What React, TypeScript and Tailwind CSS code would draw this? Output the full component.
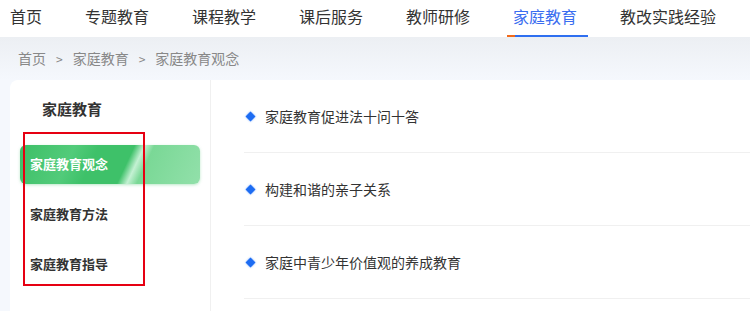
const navItems = ["首页", "专题教育", "课程教学", "课后服务", "教师研修", "家庭教育", "教改实践经验"]

const sideItems = ["家庭教育观念", "家庭教育方法", "家庭教育指导"]

const articles = ["家庭教育促进法十问十答", "构建和谐的亲子关系", "家庭中青少年价值观的养成教育"]

export default function App() {
  return (
    <div
      className="relative h-[311px] w-[750px] overflow-hidden bg-[#f5f8fd] text-[#333]"
      style={{ fontFamily: '"Noto Sans CJK SC", "Noto Sans", sans-serif' }}
    >
      {/* Top nav */}
      <nav className="flex h-[37px] items-center gap-[43px] bg-white pl-[10px] text-[16px] leading-none">
        {navItems.map((item) => {
          const active = item === "家庭教育"
          return (
            <div key={item} className="relative flex h-full items-center pb-[6px]">
              <span className={active ? "text-[#3a6df0]" : "text-[#333]"}>{item}</span>
              {active && (
                <div className="absolute bottom-0 left-[-6px] flex h-[2px] w-[81px]">
                  <div className="w-[8px] bg-[#f26a1b]" />
                  <div className="flex-1 bg-[#2f6ff0]" />
                </div>
              )}
            </div>
          )
        })}
      </nav>

      {/* Breadcrumb */}
      <div className="flex h-[43px] items-center gap-[10px] bg-gradient-to-b from-[#eceff3] to-[#f5f8fd] pl-[18px] text-[14px] text-[#888]">
        <span>首页</span>
        <span className="text-[12px]">&gt;</span>
        <span>家庭教育</span>
        <span className="text-[12px]">&gt;</span>
        <span>家庭教育观念</span>
      </div>

      {/* Main card */}
      <div className="ml-[10px] flex h-[240px] rounded-tl-[8px] bg-white">
        <aside className="w-[201px] shrink-0 border-r border-[#f0f0f0]">
          <div className="flex h-[59px] items-center pl-[32px] text-[15px] font-bold">家庭教育</div>
          <ul>
            {sideItems.map((item, i) => (
              <li key={item} className="flex h-[50px] items-center px-[10px]">
                {i === 0 ? (
                  <div className="flex h-[39px] w-full items-center rounded-[6px] bg-[linear-gradient(115deg,#3dbf67_0%,#52cb7a_28%,#3ec169_40%,#3ec169_58%,#c4f1d3_63%,#7ad896_68%,#92e0aa_100%)] pl-[10px] text-[13px] font-bold text-white shadow-[0_1px_3px_rgba(60,190,100,0.35)]">
                    {item}
                  </div>
                ) : (
                  <div className="pl-[10px] text-[13px] font-bold text-[#333]">{item}</div>
                )}
              </li>
            ))}
          </ul>
        </aside>

        <section className="flex-1 pl-[33px]">
          {articles.map((title) => (
            <div key={title} className="flex h-[73px] items-center border-b border-[#f0f0f0]">
              <span className="ml-[3px] mr-[11px] h-[7px] w-[7px] rotate-45 bg-[#1d6cf2] shadow-[0_0_2px_#6aa0ff]" />
              <span className="text-[14px] text-[#333]">{title}</span>
            </div>
          ))}
        </section>
      </div>

      {/* Annotation box */}
      <div className="absolute left-[23px] top-[132px] h-[154px] w-[122px] border-2 border-[#e60012]" />
    </div>
  )
}
